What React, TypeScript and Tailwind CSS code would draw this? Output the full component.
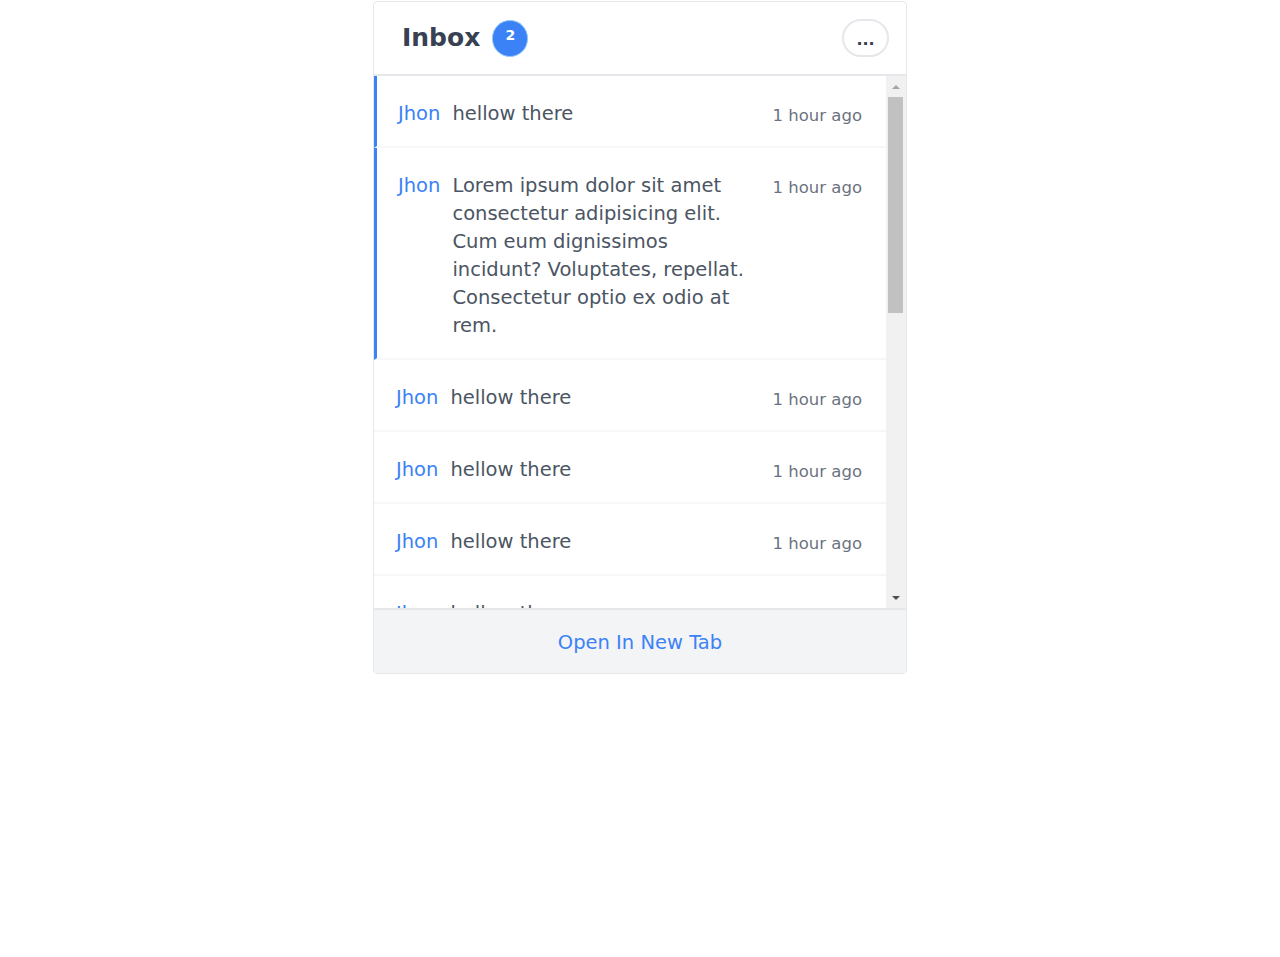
const messages = [
  { name: "Jhon", text: "hellow there", time: "1 hour ago", unread: true },
  {
    name: "Jhon",
    text: "Lorem ipsum dolor sit amet consectetur adipisicing elit. Cum eum dignissimos incidunt? Voluptates, repellat. Consectetur optio ex odio at rem.",
    time: "1 hour ago",
    unread: true,
  },
  ...Array.from({ length: 13 }, () => ({ name: "Jhon", text: "hellow there", time: "1 hour ago", unread: false })),
];

export default function App() {
  return (
    <div className="min-h-screen bg-white pt-px" style={{ fontFamily: '"DejaVu Sans", sans-serif' }}>
      <div className="w-[534px] mx-auto border border-[#e5e7eb] rounded-sm flex flex-col">
        {/* Header */}
        <div className="h-[74px] flex items-center justify-between pl-7 pr-[17px] border-b-2 border-[#e5e7eb]">
          <div className="flex items-center gap-3">
            <h1 className="text-[25px] font-bold text-[#374151]">Inbox</h1>
            <span className="w-9 h-[37px] rounded-full bg-[#3b82f6] border border-[#93c5fd] text-white text-sm font-bold flex justify-center pt-1">
              2
            </span>
          </div>
          <button className="w-[47px] h-[38px] rounded-full border-2 border-[#e5e7eb] text-[#374151] font-bold text-base leading-none flex items-center justify-center pt-1">
            ...
          </button>
        </div>

        {/* Messages */}
        <div className="h-[532px] flex">
          <div className="flex-1 overflow-y-scroll [scrollbar-width:none]">
            {messages.map((m, i) => (
              <div
                key={i}
                className={
                  "flex items-start justify-between gap-4 pr-6 pt-6 pb-[18px] border-b-2 border-[#f7f7f8] " +
                  (m.unread ? "border-l-[3px] border-l-[#3b82f6] pl-[21px]" : "pl-[22px]")
                }
              >
                <div className="flex items-start gap-3 flex-1">
                  <span className="text-[19.5px] leading-7 text-[#3b82f6] shrink-0">{m.name}</span>
                  <p className="text-[19.5px] leading-7 text-[#4b5563]">{m.text}</p>
                </div>
                <span className="text-[16.5px] leading-6 text-[#6b7280] shrink-0 mt-1">{m.time}</span>
              </div>
            ))}
          </div>

          {/* Scrollbar */}
          <div className="w-5 shrink-0 bg-[#f1f1f1] flex flex-col">
            <div className="h-[21px] flex items-center justify-center">
              <div className="w-0 h-0 border-x-4 border-x-transparent border-b-4 border-b-[#a3a3a3]" />
            </div>
            <div className="flex-1">
              <div className="h-[216px] ml-[2px] mr-[3px] bg-[#c1c1c1]" />
            </div>
            <div className="h-[21px] flex items-center justify-center">
              <div className="w-0 h-0 border-x-4 border-x-transparent border-t-4 border-t-[#505050]" />
            </div>
          </div>
        </div>

        {/* Footer */}
        <div className="h-[65px] border-t-2 border-[#e5e7eb] bg-[#f3f4f6] flex items-center justify-center pt-[3px]">
          <a className="text-[19.5px] text-[#3b82f6] cursor-pointer">Open In New Tab</a>
        </div>
      </div>
    </div>
  );
}
